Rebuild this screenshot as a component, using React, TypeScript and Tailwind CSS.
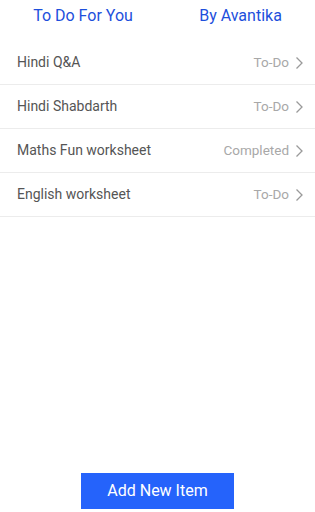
import React from "react";

const items = [
  { name: "Hindi Q&A", status: "To-Do" },
  { name: "Hindi Shabdarth", status: "To-Do" },
  { name: "Maths Fun worksheet", status: "Completed" },
  { name: "English worksheet", status: "To-Do" },
];

function Chevron() {
  return (
    <svg width="9" height="14" viewBox="0 0 9 14" className="ml-[6px]">
      <path d="M1.5 1.5 L7 7 L1.5 12.5" fill="none" stroke="#9a9a9a" strokeWidth="1.3" />
    </svg>
  );
}

export default function App() {
  return (
    <div
      className="w-[315px] h-[512px] bg-white flex flex-col"
      style={{ fontFamily: "Roboto, 'Noto Sans', sans-serif" }}
    >
      <div className="h-[41px] flex justify-around items-start pt-[5px]">
        <span className="text-[16px] leading-[22px] text-[#1d4fdc]">To Do For You</span>
        <span className="text-[16px] leading-[22px] text-[#1d4fdc]">By Avantika</span>
      </div>
      <div className="flex flex-col">
        {items.map((it) => (
          <div
            key={it.name}
            className="h-[44px] flex items-center pl-[17px] pr-[11px] border-b border-[#ececec]"
          >
            <span className="flex-1 text-[14px] text-[#555555]">{it.name}</span>
            <span className="text-[13.5px] text-[#a8a8a8]">{it.status}</span>
            <Chevron />
          </div>
        ))}
      </div>
      <div className="flex-1" />
      <div className="flex justify-center pb-[3px]">
        <button className="w-[153px] h-[36px] bg-[#2563fb] text-white text-[16px]">
          Add New Item
        </button>
      </div>
    </div>
  );
}
